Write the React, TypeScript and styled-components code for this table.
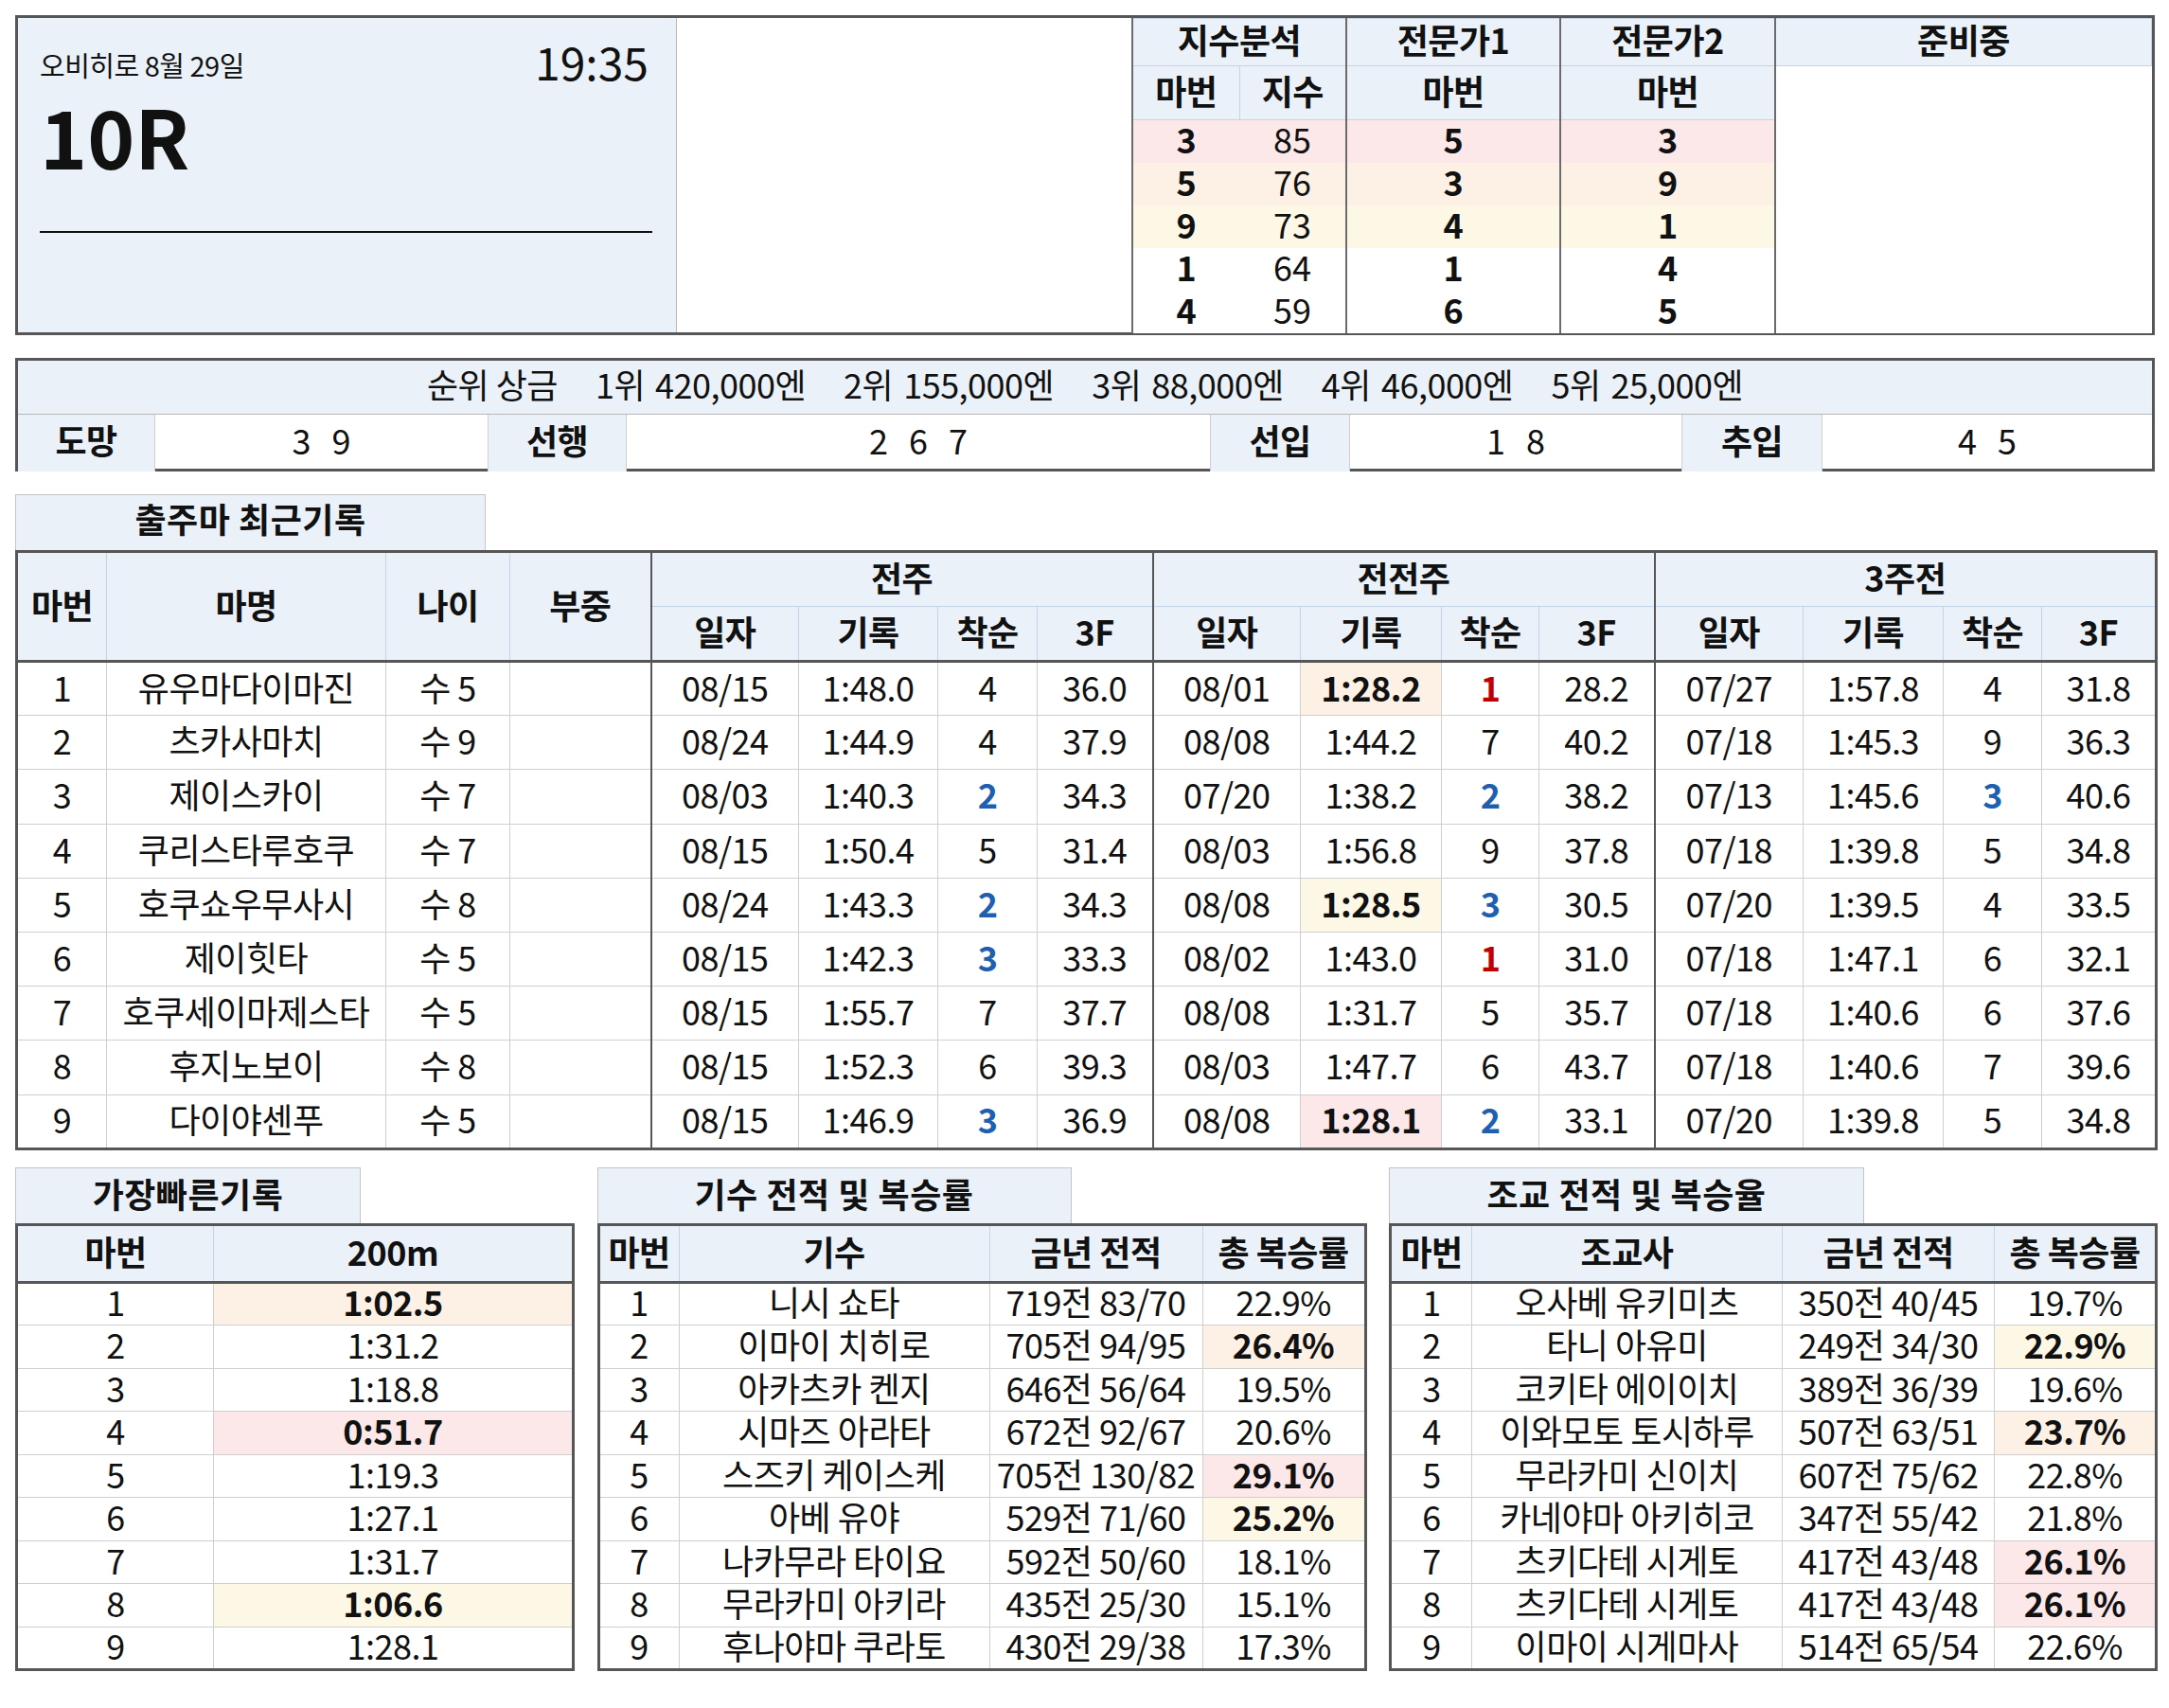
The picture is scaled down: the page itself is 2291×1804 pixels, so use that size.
import React from "react";
import styled, { createGlobalStyle } from "styled-components";

const GlobalStyle = createGlobalStyle`
  html, body {
    margin: 0;
    padding: 0;
    background: #ffffff;
  }
  body {
    font-family: "Noto Sans CJK KR", "Noto Sans", sans-serif;
    color: #111111;
  }
`;

const DARK = "#565656";
const HEAD = "#ebf1f8";
const HEAD_LINE = "#c5d3e6";
const LINE = "#cfcfcf";
const PINK = "#fde8e9";
const ORANGE = "#fdf0e4";
const YELLOW = "#fdf8e5";
const RED = "#c00000";
const BLUE = "#1f5faf";

const Page = styled.main`
  width: 2260px;
  padding: 16px;
`;

/* ---------- top block ---------- */

const TopBox = styled.section`
  display: flex;
  height: 338px;
  box-sizing: border-box;
  border: 3px solid ${DARK};
`;

const RacePanel = styled.div`
  flex: 0 0 696px;
  box-sizing: border-box;
  background: ${HEAD};
  border-right: 1px solid #b8b8b8;
  padding: 21px 25px 0 23px;
`;

const RaceTop = styled.div`
  display: flex;
  justify-content: space-between;
  align-items: flex-start;
  padding-right: 4px;
`;

const Venue = styled.div`
  margin-top: 14px;
  font-size: 29px;
  letter-spacing: -0.5px;
  line-height: 1;
`;

const StartTime = styled.div`
  font-size: 48px;
  line-height: 1;
`;

const RaceNo = styled.div`
  margin-top: 11px;
  font-size: 85px;
  font-weight: 700;
  line-height: 1;
`;

const Rule = styled.hr`
  margin: 60px 0 0;
  border: none;
  border-top: 2px solid #111;
`;

const Blank = styled.div`
  flex: 0 0 480px;
`;

const PickTable = styled.table`
  flex: 1;
  height: 100%;
  border-collapse: collapse;
  table-layout: fixed;
  border-left: 2px solid #6b6b6b;
`;

const PickCol = styled.col<{ $w?: number; $sep?: boolean }>`
  ${(p) => (p.$w ? `width: ${p.$w}px;` : "")}
  ${(p) => (p.$sep ? "border-left: 2px solid #6b6b6b;" : "")}
`;

const PickHead = styled.th<{ $h: number }>`
  box-sizing: border-box;
  height: ${(p) => p.$h}px;
  padding: 0 0 7px;
  background: ${HEAD};
  border: 1px solid ${HEAD_LINE};
  font-size: 36px;
  font-weight: 700;
  letter-spacing: -0.5px;
  line-height: 1;
  text-align: center;
`;

const PickCell = styled.td<{ $bg?: string; $bold?: boolean }>`
  box-sizing: border-box;
  height: 45px;
  padding: 0 0 6px;
  background: ${(p) => p.$bg ?? "#fff"};
  font-size: 36px;
  font-weight: ${(p) => (p.$bold ? 700 : 400)};
  line-height: 1;
  text-align: center;
`;

const EmptyCell = styled.td`
  background: #fff;
`;

/* ---------- prize / style block ---------- */

const PrizeBox = styled.section`
  margin-top: 24px;
  border: 3px solid ${DARK};
`;

const PrizeLine = styled.div`
  height: 57px;
  box-sizing: border-box;
  padding-bottom: 9px;
  background: ${HEAD};
  border-bottom: 1px solid #b8b8b8;
  display: flex;
  align-items: center;
  justify-content: center;
  gap: 40px;
  font-size: 36px;
  letter-spacing: -0.5px;
  line-height: 1;
`;

const PrizeItem = styled.span`
  display: inline-flex;
  gap: 11px;
  white-space: nowrap;
`;

const StyleRow = styled.div`
  display: grid;
  grid-template-columns: 145px 352px 146px 617px 147px 351px 148px 1fr;
  height: 57px;
`;

const StyleLabel = styled.div`
  display: flex;
  align-items: center;
  justify-content: center;
  padding-bottom: 8px;
  background: ${HEAD};
  border-right: 1px solid ${LINE};
  font-size: 36px;
  font-weight: 700;
  letter-spacing: -0.5px;
`;

const StyleValue = styled.div`
  display: flex;
  align-items: center;
  justify-content: center;
  padding-bottom: 8px;
  border-right: 1px solid ${LINE};
  font-size: 36px;
  word-spacing: 14px;
  &:last-child {
    border-right: none;
  }
`;

/* ---------- tables ---------- */

const Block = styled.section<{ $top: number; $w?: number }>`
  margin-top: ${(p) => p.$top}px;
  ${(p) => (p.$w ? `width: ${p.$w}px;` : "")}
`;

const Tab = styled.div<{ $w: number; $lift?: number }>`
  width: ${(p) => p.$w}px;
  height: 59px;
  box-sizing: border-box;
  padding-bottom: ${(p) => p.$lift ?? 6}px;
  background: ${HEAD};
  border: 1px solid #c4c4c4;
  border-bottom: none;
  display: flex;
  align-items: center;
  justify-content: center;
  font-size: 36px;
  font-weight: 700;
  letter-spacing: 0.5px;
`;

const Table = styled.table<{ $w: number }>`
  width: ${(p) => p.$w}px;
  border-collapse: collapse;
  table-layout: fixed;
  border: 3px solid ${DARK};
`;

const Col = styled.col<{ $w: number; $sep?: boolean }>`
  width: ${(p) => p.$w}px;
  ${(p) => (p.$sep ? `border-left: 2px solid ${DARK};` : "")}
`;

const Head = styled.thead`
  border-bottom: 3px solid ${DARK};
`;

const HeadCell = styled.th<{ $h: number }>`
  box-sizing: border-box;
  height: ${(p) => p.$h}px;
  padding: 0 0 6px;
  background: ${HEAD};
  border: 1px solid ${HEAD_LINE};
  font-size: 36px;
  font-weight: 700;
  letter-spacing: -0.5px;
  line-height: 1;
  text-align: center;
  vertical-align: middle;
  white-space: nowrap;
`;

const Cell = styled.td<{ $h: number; $bg?: string; $bold?: boolean; $color?: string }>`
  box-sizing: border-box;
  height: ${(p) => p.$h}px;
  padding: 0 0 6px;
  background: ${(p) => p.$bg ?? "#fff"};
  border: 1px solid ${LINE};
  font-size: 36px;
  font-weight: ${(p) => (p.$bold ? 700 : 400)};
  color: ${(p) => p.$color ?? "#111"};
  letter-spacing: -0.5px;
  line-height: 1;
  text-align: center;
  white-space: nowrap;
`;

const BottomRow = styled.div`
  display: flex;
  justify-content: space-between;
  margin-top: 18px;
`;

/* ---------- data ---------- */

const picks = [
  { no: "3", idx: "85", e1: "5", e2: "3", bg: PINK },
  { no: "5", idx: "76", e1: "3", e2: "9", bg: ORANGE },
  { no: "9", idx: "73", e1: "4", e2: "1", bg: YELLOW },
  { no: "1", idx: "64", e1: "1", e2: "4" },
  { no: "4", idx: "59", e1: "6", e2: "5" },
];

const prizes = [
  ["1위", "420,000엔"],
  ["2위", "155,000엔"],
  ["3위", "88,000엔"],
  ["4위", "46,000엔"],
  ["5위", "25,000엔"],
];

const runStyles = [
  ["도망", "3 9"],
  ["선행", "2 6 7"],
  ["선입", "1 8"],
  ["추입", "4 5"],
];

type Race = { date: string; time: string; rank: number; f3: string; bg?: string };
type Horse = { name: string; age: string; races: Race[] };

const r = (date: string, time: string, rank: number, f3: string, bg?: string): Race => ({ date, time, rank, f3, bg });

const horses: Horse[] = [
  { name: "유우마다이마진", age: "수 5", races: [r("08/15", "1:48.0", 4, "36.0"), r("08/01", "1:28.2", 1, "28.2", ORANGE), r("07/27", "1:57.8", 4, "31.8")] },
  { name: "츠카사마치", age: "수 9", races: [r("08/24", "1:44.9", 4, "37.9"), r("08/08", "1:44.2", 7, "40.2"), r("07/18", "1:45.3", 9, "36.3")] },
  { name: "제이스카이", age: "수 7", races: [r("08/03", "1:40.3", 2, "34.3"), r("07/20", "1:38.2", 2, "38.2"), r("07/13", "1:45.6", 3, "40.6")] },
  { name: "쿠리스타루호쿠", age: "수 7", races: [r("08/15", "1:50.4", 5, "31.4"), r("08/03", "1:56.8", 9, "37.8"), r("07/18", "1:39.8", 5, "34.8")] },
  { name: "호쿠쇼우무사시", age: "수 8", races: [r("08/24", "1:43.3", 2, "34.3"), r("08/08", "1:28.5", 3, "30.5", YELLOW), r("07/20", "1:39.5", 4, "33.5")] },
  { name: "제이힛타", age: "수 5", races: [r("08/15", "1:42.3", 3, "33.3"), r("08/02", "1:43.0", 1, "31.0"), r("07/18", "1:47.1", 6, "32.1")] },
  { name: "호쿠세이마제스타", age: "수 5", races: [r("08/15", "1:55.7", 7, "37.7"), r("08/08", "1:31.7", 5, "35.7"), r("07/18", "1:40.6", 6, "37.6")] },
  { name: "후지노보이", age: "수 8", races: [r("08/15", "1:52.3", 6, "39.3"), r("08/03", "1:47.7", 6, "43.7"), r("07/18", "1:40.6", 7, "39.6")] },
  { name: "다이야센푸", age: "수 5", races: [r("08/15", "1:46.9", 3, "36.9"), r("08/08", "1:28.1", 2, "33.1", PINK), r("07/20", "1:39.8", 5, "34.8")] },
];

const rankColor = (rank: number) => (rank === 1 ? RED : rank <= 3 ? BLUE : undefined);

const fastest: [string, string?][] = [
  ["1:02.5", ORANGE],
  ["1:31.2"],
  ["1:18.8"],
  ["0:51.7", PINK],
  ["1:19.3"],
  ["1:27.1"],
  ["1:31.7"],
  ["1:06.6", YELLOW],
  ["1:28.1"],
];

type Person = [string, string, string, string?];

const jockeys: Person[] = [
  ["니시 쇼타", "719전 83/70", "22.9%"],
  ["이마이 치히로", "705전 94/95", "26.4%", ORANGE],
  ["아카츠카 켄지", "646전 56/64", "19.5%"],
  ["시마즈 아라타", "672전 92/67", "20.6%"],
  ["스즈키 케이스케", "705전 130/82", "29.1%", PINK],
  ["아베 유야", "529전 71/60", "25.2%", YELLOW],
  ["나카무라 타이요", "592전 50/60", "18.1%"],
  ["무라카미 아키라", "435전 25/30", "15.1%"],
  ["후나야마 쿠라토", "430전 29/38", "17.3%"],
];

const trainers: Person[] = [
  ["오사베 유키미츠", "350전 40/45", "19.7%"],
  ["타니 아유미", "249전 34/30", "22.9%", YELLOW],
  ["코키타 에이이치", "389전 36/39", "19.6%"],
  ["이와모토 토시하루", "507전 63/51", "23.7%", ORANGE],
  ["무라카미 신이치", "607전 75/62", "22.8%"],
  ["카네야마 아키히코", "347전 55/42", "21.8%"],
  ["츠키다테 시게토", "417전 43/48", "26.1%", PINK],
  ["츠키다테 시게토", "417전 43/48", "26.1%", PINK],
  ["이마이 시게마사", "514전 65/54", "22.6%"],
];

/* ---------- components ---------- */

const HEAD_H = 61;
const ROW_H = 45.5;

const PersonTable = ({ title, tabW, width, cols, role, rows }: { title: string; tabW: number; width: number; cols: number[]; role: string; rows: Person[] }) => (
  <Block $top={0} $w={width}>
    <Tab $w={tabW}>{title}</Tab>
    <Table $w={width}>
      <colgroup>
        {cols.map((w, i) => (
          <Col key={i} $w={w} />
        ))}
      </colgroup>
      <Head>
        <tr>
          <HeadCell $h={HEAD_H}>마번</HeadCell>
          <HeadCell $h={HEAD_H}>{role}</HeadCell>
          <HeadCell $h={HEAD_H}>금년 전적</HeadCell>
          <HeadCell $h={HEAD_H}>총 복승률</HeadCell>
        </tr>
      </Head>
      <tbody>
        {rows.map(([name, record, rate, bg], i) => (
          <tr key={i}>
            <Cell $h={ROW_H}>{i + 1}</Cell>
            <Cell $h={ROW_H}>{name}</Cell>
            <Cell $h={ROW_H}>{record}</Cell>
            <Cell $h={ROW_H} $bg={bg} $bold={!!bg}>
              {rate}
            </Cell>
          </tr>
        ))}
      </tbody>
    </Table>
  </Block>
);

const App = () => {
  const raceCols = [156, 147, 105, 122, 156, 149, 103, 122, 157, 148, 104, 121];

  return (
    <Page>
      <GlobalStyle />

      <TopBox>
        <RacePanel>
          <RaceTop>
            <Venue>오비히로 8월 29일</Venue>
            <StartTime>19:35</StartTime>
          </RaceTop>
          <RaceNo>10R</RaceNo>
          <Rule />
        </RacePanel>
        <Blank />
        <PickTable>
          <colgroup>
            <PickCol $w={113} />
            <PickCol $w={113} />
            <PickCol $w={226} $sep />
            <PickCol $w={227} $sep />
            <PickCol $sep />
          </colgroup>
          <tbody>
            <tr>
              <PickHead $h={50} colSpan={2}>지수분석</PickHead>
              <PickHead $h={50}>전문가1</PickHead>
              <PickHead $h={50}>전문가2</PickHead>
              <PickHead $h={50}>준비중</PickHead>
            </tr>
            <tr>
              <PickHead $h={57}>마번</PickHead>
              <PickHead $h={57}>지수</PickHead>
              <PickHead $h={57}>마번</PickHead>
              <PickHead $h={57}>마번</PickHead>
              <EmptyCell rowSpan={6} />
            </tr>
            {picks.map((p) => (
              <tr key={p.no}>
                <PickCell $bg={p.bg} $bold>
                  {p.no}
                </PickCell>
                <PickCell $bg={p.bg}>{p.idx}</PickCell>
                <PickCell $bg={p.bg} $bold>
                  {p.e1}
                </PickCell>
                <PickCell $bg={p.bg} $bold>
                  {p.e2}
                </PickCell>
              </tr>
            ))}
          </tbody>
        </PickTable>
      </TopBox>

      <PrizeBox>
        <PrizeLine>
          <span>순위 상금</span>
          {prizes.map(([rank, amount]) => (
            <PrizeItem key={rank}>
              <span>{rank}</span>
              <span>{amount}</span>
            </PrizeItem>
          ))}
        </PrizeLine>
        <StyleRow>
          {runStyles.map(([label, value]) => (
            <React.Fragment key={label}>
              <StyleLabel>{label}</StyleLabel>
              <StyleValue>{value}</StyleValue>
            </React.Fragment>
          ))}
        </StyleRow>
      </PrizeBox>

      <Block $top={24}>
        <Tab $w={497} $lift={10}>출주마 최근기록</Tab>
        <Table $w={2260}>
          <colgroup>
            <Col $w={95} />
            <Col $w={295} />
            <Col $w={131} />
            <Col $w={149} />
            {raceCols.map((w, i) => (
              <Col key={i} $w={w} $sep={i % 4 === 0} />
            ))}
          </colgroup>
          <Head>
            <tr>
              <HeadCell $h={58} rowSpan={2}>마번</HeadCell>
              <HeadCell $h={58} rowSpan={2}>마명</HeadCell>
              <HeadCell $h={58} rowSpan={2}>나이</HeadCell>
              <HeadCell $h={58} rowSpan={2}>부중</HeadCell>
              <HeadCell $h={58} colSpan={4}>전주</HeadCell>
              <HeadCell $h={58} colSpan={4}>전전주</HeadCell>
              <HeadCell $h={58} colSpan={4}>3주전</HeadCell>
            </tr>
            <tr>
              {[0, 1, 2].map((g) => (
                <React.Fragment key={g}>
                  <HeadCell $h={58}>일자</HeadCell>
                  <HeadCell $h={58}>기록</HeadCell>
                  <HeadCell $h={58}>착순</HeadCell>
                  <HeadCell $h={58}>3F</HeadCell>
                </React.Fragment>
              ))}
            </tr>
          </Head>
          <tbody>
            {horses.map((h, i) => (
              <tr key={i}>
                <Cell $h={57.2}>{i + 1}</Cell>
                <Cell $h={57.2}>{h.name}</Cell>
                <Cell $h={57.2}>{h.age}</Cell>
                <Cell $h={57.2} />
                {h.races.map((race, j) => (
                  <React.Fragment key={j}>
                    <Cell $h={57.2}>{race.date}</Cell>
                    <Cell $h={57.2} $bg={race.bg} $bold={!!race.bg}>
                      {race.time}
                    </Cell>
                    <Cell $h={57.2} $color={rankColor(race.rank)} $bold={race.rank <= 3}>
                      {race.rank}
                    </Cell>
                    <Cell $h={57.2}>{race.f3}</Cell>
                  </React.Fragment>
                ))}
              </tr>
            ))}
          </tbody>
        </Table>
      </Block>

      <BottomRow>
        <Block $top={0} $w={588}>
          <Tab $w={365}>가장빠른기록</Tab>
          <Table $w={588}>
            <colgroup>
              <Col $w={208} />
              <Col $w={380} />
            </colgroup>
            <Head>
              <tr>
                <HeadCell $h={HEAD_H}>마번</HeadCell>
                <HeadCell $h={HEAD_H}>200m</HeadCell>
              </tr>
            </Head>
            <tbody>
              {fastest.map(([time, bg], i) => (
                <tr key={i}>
                  <Cell $h={ROW_H}>{i + 1}</Cell>
                  <Cell $h={ROW_H} $bg={bg} $bold={!!bg}>
                    {time}
                  </Cell>
                </tr>
              ))}
            </tbody>
          </Table>
        </Block>
        <PersonTable title="기수 전적 및 복승률" tabW={501} width={810} cols={[85, 328, 225, 172]} role="기수" rows={jockeys} />
        <PersonTable title="조교 전적 및 복승율" tabW={502} width={809} cols={[86, 328, 224, 171]} role="조교사" rows={trainers} />
      </BottomRow>
    </Page>
  );
};

export default App;
